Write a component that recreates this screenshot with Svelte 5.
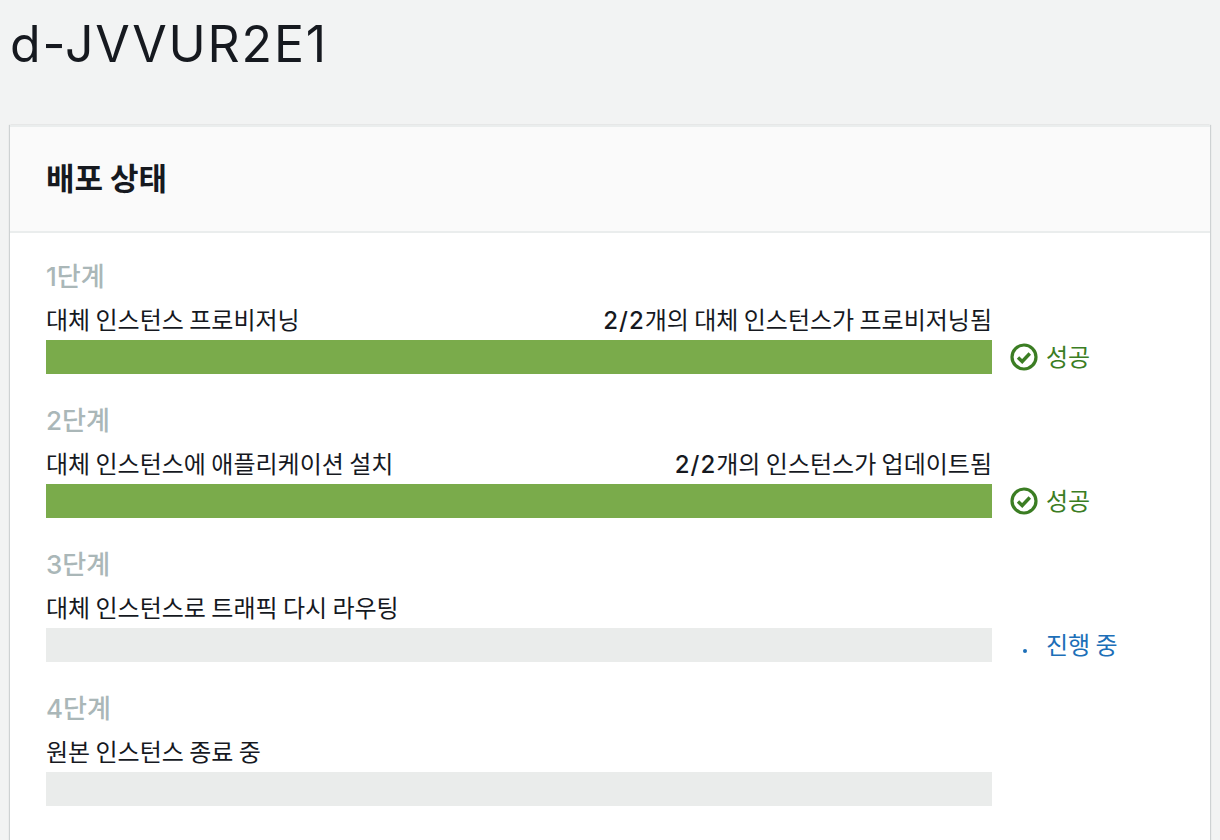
<script>
  const steps = [
    { num: '1', label: '단계', title: '대체 인스턴스 프로비저닝', count: '2/2', detail: '개의 대체 인스턴스가 프로비저닝됨', state: 'success' },
    { num: '2', label: '단계', title: '대체 인스턴스에 애플리케이션 설치', count: '2/2', detail: '개의 인스턴스가 업데이트됨', state: 'success' },
    { num: '3', label: '단계', title: '대체 인스턴스로 트래픽 다시 라우팅', count: '', detail: '', state: 'progress' },
    { num: '4', label: '단계', title: '원본 인스턴스 종료 중', count: '', detail: '', state: 'pending' }
  ];
</script>

<div class="page">
  <h1>d-JVVUR2E1</h1>
  <section class="card">
    <header class="card-head"><h2>배포 상태</h2></header>
    <div class="card-body">
      {#each steps as step}
        <div class="step">
          <div class="step-label"><span class="latin">{step.num}</span>{step.label}</div>
          <div class="texts">
            <span>{step.title}</span>
            <span><span class="latin count">{step.count}</span>{step.detail}</span>
          </div>
          <div class="row">
            <div class="bar" class:done={step.state === 'success'}></div>
            {#if step.state === 'success'}
              <div class="status ok">
                <svg width="28" height="28" viewBox="0 0 28 28" fill="none" stroke="currentColor">
                  <circle cx="14" cy="14" r="12" stroke-width="3.2" />
                  <path d="M8 14.5l4.2 4 7.6-8" stroke-width="3.4" />
                </svg>
                <span class="status-text">성공</span>
              </div>
            {:else if step.state === 'progress'}
              <div class="status busy">
                <span class="dot"></span>
                <span class="status-text">진행 중</span>
              </div>
            {/if}
          </div>
        </div>
      {/each}
    </div>
  </section>
</div>

<style>
  :global(body) {
    margin: 0;
    background: #f2f3f3;
    font-family: "Noto Sans CJK KR", sans-serif;
    color: #16191f;
  }

  .page {
    height: 840px;
    overflow: hidden;
    padding: 0 10px;
  }

  h1 {
    margin: 0;
    height: 125px;
    padding-top: 14px;
    box-sizing: border-box;
    font-family: Inter, sans-serif;
    font-size: 50px;
    font-weight: 400;
    letter-spacing: 1.8px;
    line-height: 60px;
  }

  .latin {
    font-family: Inter, sans-serif;
    font-weight: 500;
    line-height: 1;
  }

  .count {
    letter-spacing: 1px;
  }

  .card {
    background: #fff;
    border-top: 2px solid #eaeded;
    box-shadow: -1px 0 1px rgba(0, 28, 36, 0.15), 1px 0 1px rgba(0, 28, 36, 0.15);
    height: 760px;
  }

  .card-head {
    background: #fafafa;
    border-bottom: 2px solid #eaeded;
    height: 106px;
    box-sizing: border-box;
    padding: 0 36px 6px;
    display: flex;
    align-items: center;
  }

  h2 {
    margin: 0;
    font-size: 31px;
    font-weight: 700;
  }

  .card-body {
    padding: 24px 36px 0;
  }

  .step {
    height: 144px;
  }

  .step-label {
    color: #aab7b8;
    font-size: 26px;
    font-weight: 500;
    line-height: 36px;
  }

  .row {
    display: flex;
    align-items: center;
  }

  .texts {
    display: flex;
    justify-content: space-between;
    width: 946px;
    font-size: 24px;
    line-height: 36px;
    height: 39px;
    margin-top: 8px;
  }

  .bar {
    width: 946px;
    height: 34px;
    background: #eaeceb;
  }

  .bar.done {
    background: #7aab4b;
  }

  .status {
    display: flex;
    align-items: center;
    font-size: 24px;
    height: 34px;
    margin-left: 18px;
    gap: 8px;
  }

  .status-text {
    margin-bottom: 4px;
  }

  .ok {
    color: #3b7d23;
  }

  .busy {
    color: #1d6fb8;
  }

  .dot {
    width: 4px;
    height: 4px;
    border-radius: 50%;
    background: #1d6fb8;
    margin: 12px 11px 0 13px;
  }
</style>
